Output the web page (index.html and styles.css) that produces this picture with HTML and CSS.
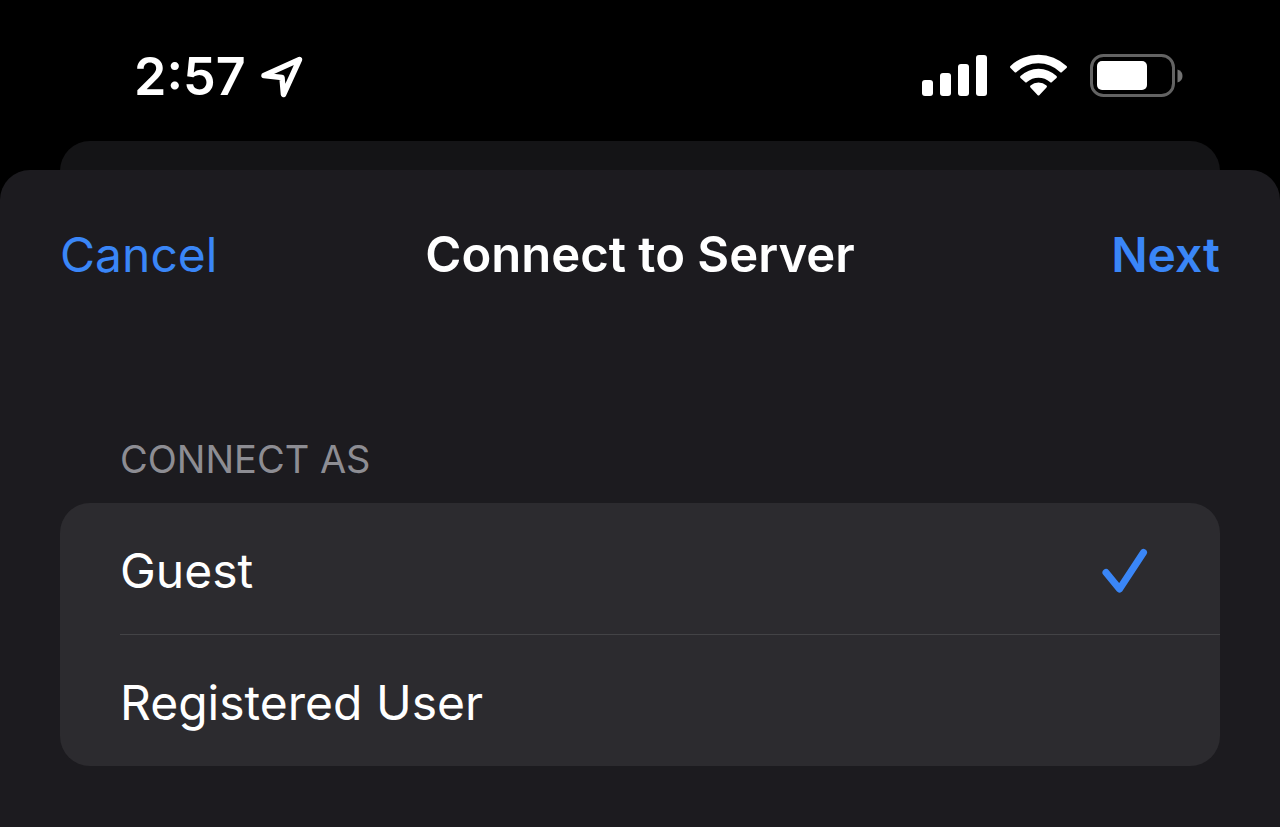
FILE: index.html
```html
<!DOCTYPE html>
<html lang="en">
<head>
<meta charset="utf-8">
<meta name="viewport" content="width=device-width, initial-scale=1">
<title>Connect to Server</title>
<link rel="stylesheet" href="styles.css">
</head>
<body>
<header class="status">
  <div class="status-left">
    <span class="time">2:57</span>
    <svg class="location" width="44" height="44" viewBox="0 0 44 44" aria-hidden="true">
      <path d="M4 20.500 39.500 4.500 23.500 39.500 22 22.500Z" fill="none" stroke="#fff" stroke-width="5.500" stroke-linejoin="round"/>
    </svg>
  </div>
  <div class="status-right">
    <svg width="66" height="44" viewBox="0 0 66 44" fill="#fff" aria-hidden="true">
      <rect x="0" y="26" width="11" height="16" rx="3"/>
      <rect x="18" y="19" width="11" height="23" rx="3"/>
      <rect x="36" y="10" width="11" height="32" rx="3"/>
      <rect x="54" y="1" width="11" height="41" rx="3"/>
    </svg>
    <svg width="58" height="44" viewBox="0 0 58 44" fill="#fff" aria-hidden="true">
      <path d="M.5 12Q-.5 13 .5 14L4.500 18Q5.500 19 6.500 18A31.500 31.500 0 0 1 50 18Q51 19 52 18L56.500 14Q57.500 13 56.500 12A40.500 40.500 0 0 0 .5 12Z"/>
      <path d="M10.500 22Q9.500 23 10.500 24L15 28Q16 29 17 28A17.500 17.500 0 0 1 40 28Q41 29 42 28L46.500 24Q47.500 23 46.500 22A26 26 0 0 0 10.500 22Z"/>
      <path d="M20.500 31.500Q19.500 32.500 20.500 33.500L27.500 41Q28.500 42 29.500 41L36.500 33.500Q37.500 32.500 36.500 31.500A12.500 12.500 0 0 0 20.500 31.500Z"/>
    </svg>
    <svg class="battery" width="94" height="44" viewBox="0 0 94 44" aria-hidden="true">
      <rect x="1.500" y="1.500" width="82" height="40" rx="12" fill="none" stroke="#636363" stroke-width="3"/>
      <rect x="7" y="7" width="50" height="29" rx="5" fill="#fff"/>
      <path d="M87.500 15.500C91 16.500 92.500 19 92.500 22S91 27.500 87.500 28.500Z" fill="#737373"/>
    </svg>
  </div>
</header>
<div class="sheet-behind"></div>
<main class="sheet">
  <nav class="navbar">
    <button class="nav-button" type="button">Cancel</button>
    <h1 class="title">Connect to Server</h1>
    <button class="nav-button nav-next" type="button">Next</button>
  </nav>
  <fieldset class="group">
    <legend class="group-title">CONNECT AS</legend>
    <div class="list">
      <label class="row">
        <span>Guest</span>
        <span class="mark">
          <input class="radio" type="radio" name="identity" checked>
          <svg class="check" width="46" height="46" viewBox="0 0 46 46" aria-hidden="true">
            <path d="M4 24.500 17.500 41 41.500 4.500" fill="none" stroke="#3a86f7" stroke-width="7" stroke-linecap="round" stroke-linejoin="round"/>
          </svg>
        </span>
      </label>
      <label class="row">
        <span>Registered User</span>
        <span class="mark">
          <input class="radio" type="radio" name="identity">
          <svg class="check" width="46" height="46" viewBox="0 0 46 46" aria-hidden="true">
            <path d="M4 24.500 17.500 41 41.500 4.500" fill="none" stroke="#3a86f7" stroke-width="7" stroke-linecap="round" stroke-linejoin="round"/>
          </svg>
        </span>
      </label>
    </div>
  </fieldset>
</main>
</body>
</html>
```
FILE: styles.css
```css
* {
  box-sizing: border-box;
}

body {
  display: flex;
  flex-direction: column;
  min-height: 100vh;
  margin: 0;
  background: #000;
  color: #fff;
  font-family: Inter, "Liberation Sans", sans-serif;
  font-size: 48px;
  line-height: 60px;
}

svg {
  display: block;
}

.status {
  display: flex;
  align-items: center;
  justify-content: space-between;
  padding: 45px 96px 34px 134px;
}

.status-left {
  display: flex;
  align-items: center;
  gap: 14px;
  padding-top: 2px;
}

.time {
  font-size: 52px;
  font-weight: 600;
}

.status-right {
  display: flex;
  align-items: center;
  gap: 22px;
}

.sheet-behind {
  height: 60px;
  margin: 0 60px -31px;
  border-radius: 30px 30px 0 0;
  background: #141416;
}

.sheet {
  flex: 1;
  padding: 55px 60px 60px;
  border-radius: 30px 30px 0 0;
  background: #1c1b1f;
}

.navbar {
  display: grid;
  grid-template-columns: 1fr auto 1fr;
  align-items: center;
}

.nav-button {
  justify-self: start;
  padding: 0;
  border: 0;
  background: none;
  color: #3a86f7;
  font: inherit;
}

.nav-next {
  justify-self: end;
  font-weight: 600;
}

.title {
  margin: 0;
  font-size: 49px;
  font-weight: 600;
}

.group {
  min-width: 0;
  margin: 144px 0 0;
  padding: 0;
  border: 0;
}

.group-title {
  padding: 0 60px 14px;
  color: #8d8d93;
  font-size: 38px;
}

.list {
  border-radius: 30px;
  background: #2c2b2f;
}

.row {
  display: flex;
  align-items: center;
  justify-content: space-between;
  margin-left: 60px;
  padding: 38px 72px 33px 0;
}

.row + .row {
  border-top: 1px solid #434346;
}

.mark {
  display: grid;
}

.radio,
.check {
  grid-area: 1 / 1;
}

.radio {
  width: 46px;
  height: 46px;
  margin: 0;
  appearance: none;
}

.check {
  visibility: hidden;
  pointer-events: none;
}

.radio:checked + .check {
  visibility: visible;
}
```
